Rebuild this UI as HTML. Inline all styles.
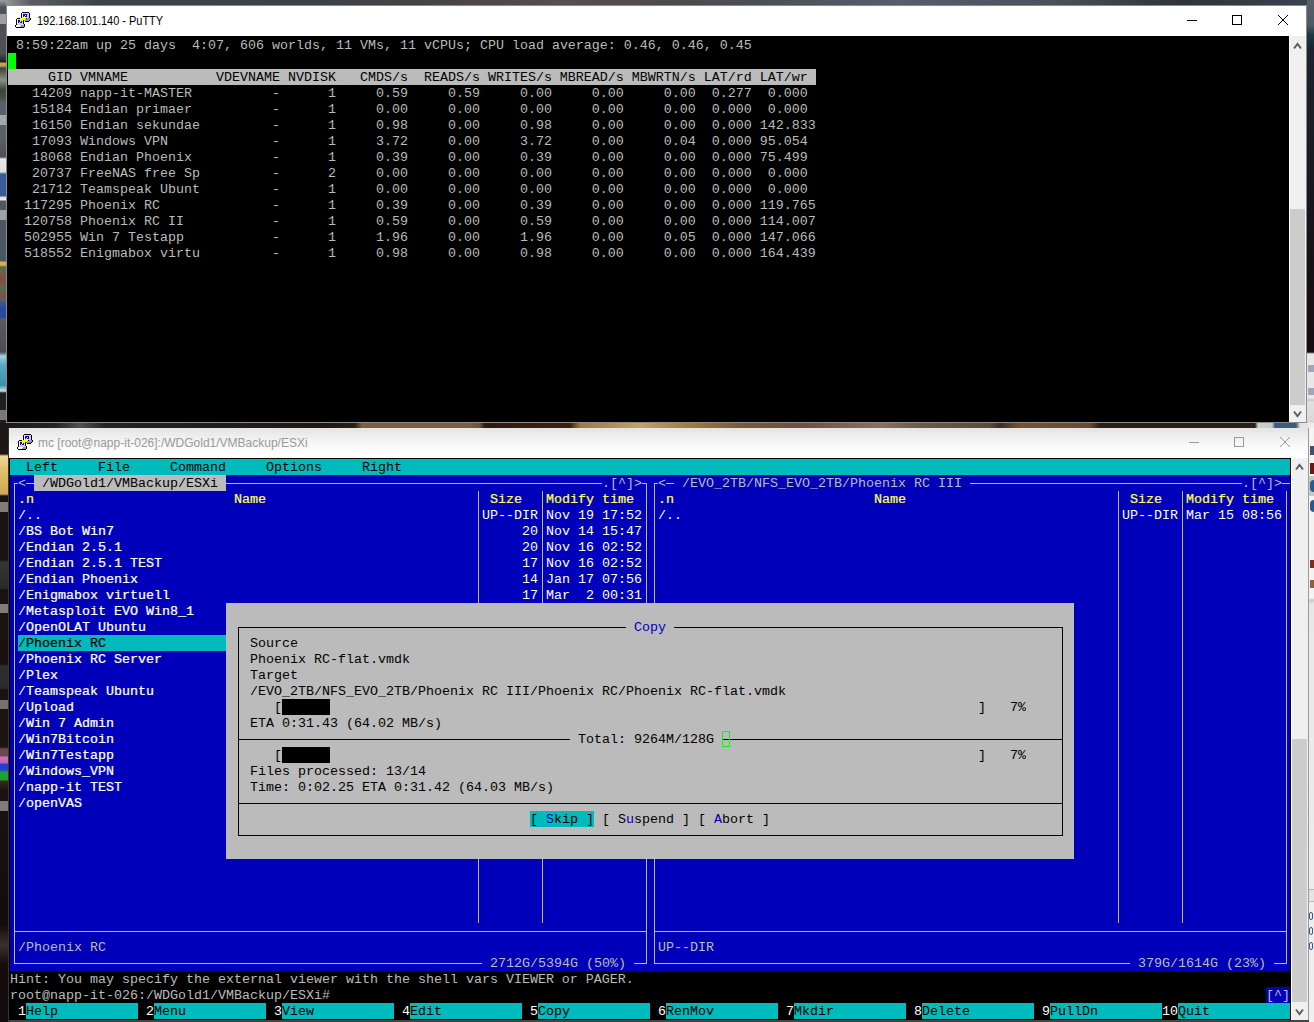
<!DOCTYPE html>
<html><head><meta charset="utf-8">
<style>
html,body{margin:0;padding:0;}
body{width:1314px;height:1022px;position:relative;overflow:hidden;background:#1c1614;}
.b{position:absolute;}
.t{position:absolute;white-space:pre;font-family:"Liberation Mono",monospace;font-size:13.3333px;line-height:16px;height:15px;padding-top:1px;}
.t>i{font-style:normal;display:inline-block;transform:scaleY(0.9);transform-origin:0 12px;}
.b2{-webkit-text-stroke:0.25px currentColor;}
.cap{position:absolute;font-family:"Liberation Sans",sans-serif;font-size:12px;white-space:pre;}
</style></head><body>
<!-- desktop -->
<div class="b" style="left:0;top:0;width:1314px;height:6px;background:linear-gradient(90deg,#a0a4a8 0,#5a5e62 30px,#3c4348 100px,#3a4248 320px,#4a4448 450px,#5a4c4c 560px,#4e4a4e 680px,#4a5058 760px,#545e6c 900px,#4a525c 1050px,#2e343a 1180px,#3a4450 1314px)"></div>
<div class="b" style="left:0;top:0;width:6px;height:423px;background:linear-gradient(180deg,#9a9ea2 0,#6a6e72 5px,#4e5256 7px,#4c5054 54px,#2a2a2a 60px,#1e1c1c 62px,#c8a850 63px,#c0a050 66px,#3a4438 68px,#8a9088 80px,#3a4438 90px,#485048 98px,#5a6068 102px,#5a6068 140px,#505458 150px,#505458 157px,#e8e8e8 159px,#e0e0e0 172px,#3a5a9a 174px,#3a5a9a 196px,#e0e0e0 197px,#e8e8e8 200px,#50565c 201px,#50565c 230px,#4a5866 234px,#4a5866 261px,#d8b050 262px,#d8b050 265px,#50704a 267px,#8a4848 280px,#50704a 290px,#8a4848 297px,#586068 299px,#2a4aa0 308px,#2a4aa0 317px,#585c62 319px,#4a4e54 352px,#a0d0e0 356px,#5aaac0 365px,#3a90a8 385px,#c8e0e8 391px,#202020 393px,#202020 423px)"></div>
<div class="b" style="left:0;top:14px;width:6px;height:10px;background:rgba(255,255,255,0.45)"></div>
<div class="b" style="left:0;top:115px;width:6px;height:10px;background:rgba(255,255,255,0.45)"></div>
<div class="b" style="left:0;top:210px;width:6px;height:10px;background:rgba(255,255,255,0.45)"></div>
<div class="b" style="left:0;top:410px;width:6px;height:10px;background:rgba(255,255,255,0.4)"></div>
<div class="b" style="left:6px;top:160px;width:1px;height:0px"></div>
<div class="b" style="left:1307px;top:0;width:7px;height:423px;background:linear-gradient(180deg,#5a6068 0,#4a5a66 25px,#1a3a44 35px,#1c2230 50px,#1a1a22 150px,#161218 250px,#140c10 352px,#e8e8e8 354px,#e8e8e8 398px,#c8c8c8 400px,#e0e0e0 402px,#d8d8d8 423px)"></div><div class="b" style="left:1308px;top:365px;width:6px;height:7px;background:rgba(90,100,140,0.5)"></div><div class="b" style="left:1308px;top:388px;width:6px;height:7px;background:rgba(90,100,140,0.5)"></div>
<div class="b" style="left:0;top:423px;width:1314px;height:5px;background:linear-gradient(90deg,#1a1616 0px,#252222 55px,#505050 80px,#252222 105px,#1e1814 330px,#2a1e14 355px,#7a6040 362px,#7a6040 470px,#6a5038 480px,#2a1a10 485px,#3a2010 545px,#3a2010 570px,#a07840 580px,#c8a060 640px,#a07030 700px,#7a5a3a 740px,#6a5040 800px,#8a7060 880px,#6a5a48 920px,#5a4a3a 990px,#3a3028 1000px,#7a5030 1020px,#6a4a2a 1090px,#2a2018 1100px,#2a2018 1255px,#d0d0d0 1258px,#c8c8c8 1272px,#3a5a80 1275px,#3a5a80 1296px,#e0e0e0 1300px,#f0f0f0 1314px)"></div>
<div class="b" style="left:0;top:428px;width:9px;height:594px;background:linear-gradient(180deg,#1e1614 0px,#1e1614 26px,#f0d898 28px,#e0c070 42px,#d0a858 66px,#1a1212 68px,#1a1212 132px,#353535 134px,#2a2a2a 160px,#1a1212 162px,#1a1010 236px,#2e2e2e 238px,#2a2a2a 260px,#1a1212 262px,#1e1414 319px,#6a4a50 321px,#6a4a50 328px,#d070c0 329px,#c060b0 335px,#2040d0 336px,#2040d0 342px,#20a030 344px,#20a030 352px,#3a2a20 353px,#1a1212 362px,#140c0c 497px,#3a3030 517px,#140c0c 537px,#140c0c 594px)"></div>
<div class="b" style="left:0;top:502px;width:8px;height:10px;background:rgba(255,255,255,0.45)"></div>
<div class="b" style="left:0;top:604px;width:8px;height:9px;background:rgba(255,255,255,0.45)"></div>
<div class="b" style="left:0;top:700px;width:8px;height:9px;background:rgba(255,255,255,0.4)"></div>
<div class="b" style="left:0;top:801px;width:8px;height:10px;background:rgba(255,255,255,0.45)"></div>
<div class="b" style="left:8px;top:428px;width:1px;height:594px;background:#3a3230"></div>
<div class="b" style="left:1309px;top:428px;width:5px;height:594px;background:linear-gradient(180deg,#f4f4f4 0,#f4f4f4 170px,#c8c8c8 172px,#e8e8e8 176px,#f0f0f0 594px)"></div>

<div class="b" style="left:1310px;top:446px;width:4px;height:9px;background:#40506a"></div>
<div class="b" style="left:1310px;top:463px;width:4px;height:11px;background:#6a1818"></div>
<div class="b" style="left:1309px;top:476px;width:5px;height:20px;background:#c8c8c8"></div>
<div class="b" style="left:1310px;top:480px;width:4px;height:12px;background:#2a5a8a;border-radius:6px 0 0 6px"></div>
<div class="b" style="left:1310px;top:500px;width:4px;height:12px;background:#2a5a8a;border-radius:6px 0 0 6px"></div>
<div class="b" style="left:1310px;top:560px;width:4px;height:8px;background:#7a3020"></div>
<div class="b" style="left:1310px;top:580px;width:4px;height:8px;background:#8a6040"></div>

<div class="b" style="left:1309px;top:889px;width:5px;height:13px;background:#e4e4e4;border-top:1px solid #b8b8b8;border-bottom:1px solid #b8b8b8;box-sizing:border-box"></div>
<div class="b" style="left:1309px;top:912px;width:4px;height:8px;border:1px solid #3a5a90;border-radius:2px;box-sizing:border-box"></div>
<div class="b" style="left:1309px;top:927px;width:4px;height:8px;border:1px solid #3a5a90;border-radius:2px;box-sizing:border-box"></div>
<div class="b" style="left:1309px;top:942px;width:4px;height:8px;border:1px solid #3a5a90;border-radius:2px;box-sizing:border-box"></div>

<!-- window 1 -->
<div class="b" style="left:6px;top:5px;width:1301px;height:418px;background:#8a8a8a"></div>
<div class="b" style="left:7px;top:6px;width:1299px;height:30px;background:#fff"></div>
<div class="b" style="left:7px;top:36px;width:1282px;height:386px;background:#000"></div>
<div class="b" style="left:1289px;top:36px;width:1px;height:386px;background:#fff"></div>
<div class="b" style="left:1290px;top:36px;width:16px;height:386px;background:#f0f0f0"></div>
<div class="b" style="left:1290px;top:209px;width:15px;height:196px;background:#cdcdcd"></div>
<svg class="b" style="left:1290px;top:36px" width="16" height="386" viewBox="0 0 16 386"><path d="M4 12.5 L7.5 8 L11 12.5" fill="none" stroke="#606060" stroke-width="2"/><path d="M4 375.5 L7.5 380 L11 375.5" fill="none" stroke="#606060" stroke-width="2"/></svg>
<svg class="b" style="left:15px;top:12px" width="16" height="16" viewBox="0 0 16 16" shape-rendering="crispEdges"><rect x="7" y="0" width="1" height="1" fill="#000"/><rect x="8" y="0" width="1" height="1" fill="#000"/><rect x="9" y="0" width="1" height="1" fill="#000"/><rect x="10" y="0" width="1" height="1" fill="#000"/><rect x="11" y="0" width="1" height="1" fill="#000"/><rect x="12" y="0" width="1" height="1" fill="#000"/><rect x="13" y="0" width="1" height="1" fill="#000"/><rect x="6" y="1" width="1" height="1" fill="#000"/><rect x="7" y="1" width="1" height="1" fill="#fff"/><rect x="8" y="1" width="1" height="1" fill="#d0d0d0"/><rect x="9" y="1" width="1" height="1" fill="#d0d0d0"/><rect x="10" y="1" width="1" height="1" fill="#d0d0d0"/><rect x="11" y="1" width="1" height="1" fill="#d0d0d0"/><rect x="12" y="1" width="1" height="1" fill="#d0d0d0"/><rect x="13" y="1" width="1" height="1" fill="#d0d0d0"/><rect x="14" y="1" width="1" height="1" fill="#000"/><rect x="6" y="2" width="1" height="1" fill="#000"/><rect x="7" y="2" width="1" height="1" fill="#fff"/><rect x="8" y="2" width="1" height="1" fill="#0000ff"/><rect x="9" y="2" width="1" height="1" fill="#0000ff"/><rect x="10" y="2" width="1" height="1" fill="#0000ff"/><rect x="11" y="2" width="1" height="1" fill="#0000ff"/><rect x="12" y="2" width="1" height="1" fill="#d0d0d0"/><rect x="13" y="2" width="1" height="1" fill="#d0d0d0"/><rect x="14" y="2" width="1" height="1" fill="#000"/><rect x="6" y="3" width="1" height="1" fill="#000"/><rect x="7" y="3" width="1" height="1" fill="#fff"/><rect x="8" y="3" width="1" height="1" fill="#0000ff"/><rect x="9" y="3" width="1" height="1" fill="#0000ff"/><rect x="10" y="3" width="1" height="1" fill="#ffff00"/><rect x="11" y="3" width="1" height="1" fill="#0000ff"/><rect x="12" y="3" width="1" height="1" fill="#d0d0d0"/><rect x="13" y="3" width="1" height="1" fill="#d0d0d0"/><rect x="14" y="3" width="1" height="1" fill="#000"/><rect x="6" y="4" width="1" height="1" fill="#000"/><rect x="7" y="4" width="1" height="1" fill="#fff"/><rect x="8" y="4" width="1" height="1" fill="#0000ff"/><rect x="9" y="4" width="1" height="1" fill="#ffff00"/><rect x="10" y="4" width="1" height="1" fill="#0000ff"/><rect x="11" y="4" width="1" height="1" fill="#0000ff"/><rect x="12" y="4" width="1" height="1" fill="#d0d0d0"/><rect x="13" y="4" width="1" height="1" fill="#d0d0d0"/><rect x="14" y="4" width="1" height="1" fill="#000"/><rect x="6" y="5" width="1" height="1" fill="#000"/><rect x="7" y="5" width="1" height="1" fill="#fff"/><rect x="8" y="5" width="1" height="1" fill="#ffff00"/><rect x="9" y="5" width="1" height="1" fill="#ffff00"/><rect x="10" y="5" width="1" height="1" fill="#ffff00"/><rect x="11" y="5" width="1" height="1" fill="#ffff00"/><rect x="12" y="5" width="1" height="1" fill="#d0d0d0"/><rect x="13" y="5" width="1" height="1" fill="#d0d0d0"/><rect x="14" y="5" width="1" height="1" fill="#000"/><rect x="2" y="6" width="1" height="1" fill="#000"/><rect x="3" y="6" width="1" height="1" fill="#000"/><rect x="4" y="6" width="1" height="1" fill="#000"/><rect x="5" y="6" width="1" height="1" fill="#ffff00"/><rect x="6" y="6" width="1" height="1" fill="#ffff00"/><rect x="7" y="6" width="1" height="1" fill="#ffff00"/><rect x="8" y="6" width="1" height="1" fill="#ffff00"/><rect x="9" y="6" width="1" height="1" fill="#ffff00"/><rect x="10" y="6" width="1" height="1" fill="#ffff00"/><rect x="11" y="6" width="1" height="1" fill="#000"/><rect x="12" y="6" width="1" height="1" fill="#9a9a9a"/><rect x="13" y="6" width="1" height="1" fill="#9a9a9a"/><rect x="14" y="6" width="1" height="1" fill="#9a9a9a"/><rect x="15" y="6" width="1" height="1" fill="#000"/><rect x="1" y="7" width="1" height="1" fill="#000"/><rect x="2" y="7" width="1" height="1" fill="#fff"/><rect x="3" y="7" width="1" height="1" fill="#d0d0d0"/><rect x="4" y="7" width="1" height="1" fill="#d0d0d0"/><rect x="5" y="7" width="1" height="1" fill="#d0d0d0"/><rect x="6" y="7" width="1" height="1" fill="#ffff00"/><rect x="7" y="7" width="1" height="1" fill="#ffff00"/><rect x="8" y="7" width="1" height="1" fill="#ffff00"/><rect x="9" y="7" width="1" height="1" fill="#ffff00"/><rect x="10" y="7" width="1" height="1" fill="#9a9a9a"/><rect x="11" y="7" width="1" height="1" fill="#9a9a9a"/><rect x="12" y="7" width="1" height="1" fill="#9a9a9a"/><rect x="13" y="7" width="1" height="1" fill="#9a9a9a"/><rect x="14" y="7" width="1" height="1" fill="#9a9a9a"/><rect x="15" y="7" width="1" height="1" fill="#000"/><rect x="1" y="8" width="1" height="1" fill="#000"/><rect x="2" y="8" width="1" height="1" fill="#fff"/><rect x="3" y="8" width="1" height="1" fill="#0000ff"/><rect x="4" y="8" width="1" height="1" fill="#0000ff"/><rect x="5" y="8" width="1" height="1" fill="#ffff00"/><rect x="6" y="8" width="1" height="1" fill="#ffff00"/><rect x="7" y="8" width="1" height="1" fill="#ffff00"/><rect x="8" y="8" width="1" height="1" fill="#000"/><rect x="9" y="8" width="1" height="1" fill="#9a9a9a"/><rect x="10" y="8" width="1" height="1" fill="#9a9a9a"/><rect x="11" y="8" width="1" height="1" fill="#9a9a9a"/><rect x="12" y="8" width="1" height="1" fill="#9a9a9a"/><rect x="13" y="8" width="1" height="1" fill="#9a9a9a"/><rect x="14" y="8" width="1" height="1" fill="#000"/><rect x="1" y="9" width="1" height="1" fill="#000"/><rect x="2" y="9" width="1" height="1" fill="#fff"/><rect x="3" y="9" width="1" height="1" fill="#0000ff"/><rect x="4" y="9" width="1" height="1" fill="#0000ff"/><rect x="5" y="9" width="1" height="1" fill="#ffff00"/><rect x="6" y="9" width="1" height="1" fill="#0000ff"/><rect x="7" y="9" width="1" height="1" fill="#d0d0d0"/><rect x="8" y="9" width="1" height="1" fill="#000"/><rect x="10" y="9" width="1" height="1" fill="#000"/><rect x="11" y="9" width="1" height="1" fill="#000"/><rect x="12" y="9" width="1" height="1" fill="#000"/><rect x="13" y="9" width="1" height="1" fill="#000"/><rect x="1" y="10" width="1" height="1" fill="#000"/><rect x="2" y="10" width="1" height="1" fill="#fff"/><rect x="3" y="10" width="1" height="1" fill="#0000ff"/><rect x="4" y="10" width="1" height="1" fill="#ffff00"/><rect x="5" y="10" width="1" height="1" fill="#0000ff"/><rect x="6" y="10" width="1" height="1" fill="#0000ff"/><rect x="7" y="10" width="1" height="1" fill="#d0d0d0"/><rect x="8" y="10" width="1" height="1" fill="#000"/><rect x="1" y="11" width="1" height="1" fill="#000"/><rect x="2" y="11" width="1" height="1" fill="#fff"/><rect x="3" y="11" width="1" height="1" fill="#d0d0d0"/><rect x="4" y="11" width="1" height="1" fill="#d0d0d0"/><rect x="5" y="11" width="1" height="1" fill="#d0d0d0"/><rect x="6" y="11" width="1" height="1" fill="#d0d0d0"/><rect x="7" y="11" width="1" height="1" fill="#d0d0d0"/><rect x="8" y="11" width="1" height="1" fill="#000"/><rect x="1" y="12" width="1" height="1" fill="#000"/><rect x="2" y="12" width="1" height="1" fill="#d0d0d0"/><rect x="3" y="12" width="1" height="1" fill="#d0d0d0"/><rect x="4" y="12" width="1" height="1" fill="#d0d0d0"/><rect x="5" y="12" width="1" height="1" fill="#d0d0d0"/><rect x="6" y="12" width="1" height="1" fill="#d0d0d0"/><rect x="7" y="12" width="1" height="1" fill="#d0d0d0"/><rect x="8" y="12" width="1" height="1" fill="#d0d0d0"/><rect x="9" y="12" width="1" height="1" fill="#000"/><rect x="0" y="13" width="1" height="1" fill="#000"/><rect x="1" y="13" width="1" height="1" fill="#fff"/><rect x="2" y="13" width="1" height="1" fill="#fff"/><rect x="3" y="13" width="1" height="1" fill="#fff"/><rect x="4" y="13" width="1" height="1" fill="#fff"/><rect x="5" y="13" width="1" height="1" fill="#fff"/><rect x="6" y="13" width="1" height="1" fill="#9a9a9a"/><rect x="7" y="13" width="1" height="1" fill="#9a9a9a"/><rect x="8" y="13" width="1" height="1" fill="#9a9a9a"/><rect x="9" y="13" width="1" height="1" fill="#000"/><rect x="0" y="14" width="1" height="1" fill="#000"/><rect x="1" y="14" width="1" height="1" fill="#fff"/><rect x="2" y="14" width="1" height="1" fill="#fff"/><rect x="3" y="14" width="1" height="1" fill="#fff"/><rect x="4" y="14" width="1" height="1" fill="#fff"/><rect x="5" y="14" width="1" height="1" fill="#9a9a9a"/><rect x="6" y="14" width="1" height="1" fill="#9a9a9a"/><rect x="7" y="14" width="1" height="1" fill="#9a9a9a"/><rect x="8" y="14" width="1" height="1" fill="#9a9a9a"/><rect x="9" y="14" width="1" height="1" fill="#000"/><rect x="1" y="15" width="1" height="1" fill="#000"/><rect x="2" y="15" width="1" height="1" fill="#000"/><rect x="3" y="15" width="1" height="1" fill="#000"/><rect x="4" y="15" width="1" height="1" fill="#000"/><rect x="5" y="15" width="1" height="1" fill="#000"/><rect x="6" y="15" width="1" height="1" fill="#000"/><rect x="7" y="15" width="1" height="1" fill="#000"/><rect x="8" y="15" width="1" height="1" fill="#000"/></svg>
<div class="cap" style="left:37px;top:14px;color:#000;transform:scaleX(0.913);transform-origin:0 0">192.168.101.140 - PuTTY</div>
<svg class="b" style="left:1175px;top:11px" width="130" height="20" viewBox="0 0 130 20">
<rect x="12" y="9" width="10" height="1" fill="#000"/>
<rect x="57.5" y="4.5" width="9" height="9" fill="none" stroke="#000"/>
<path d="M103 4 L113 14 M113 4 L103 14" stroke="#000" stroke-width="1"/>
</svg>

<!-- window 2 -->
<div class="b" style="left:9px;top:428px;width:1300px;height:594px;background:#9a9a9a"></div><div class="b" style="left:9px;top:1020px;width:1300px;height:2px;background:#444"></div>
<div class="b" style="left:9px;top:428px;width:1299px;height:30px;background:linear-gradient(180deg,#e4e4e4 0,#fafafa 18px,#fff 30px)"></div>
<div class="b" style="left:9px;top:458px;width:1282px;height:562px;background:#000"></div><div class="b" style="left:1291px;top:458px;width:1px;height:562px;background:#fff"></div>
<div class="b" style="left:1292px;top:458px;width:16px;height:562px;background:#f0f0f0"></div>
<div class="b" style="left:1292px;top:739px;width:15px;height:263px;background:#cdcdcd"></div>
<svg class="b" style="left:1290px;top:458px" width="18" height="562" viewBox="0 0 18 562"><path d="M6 11.5 L9.5 7 L13 11.5" fill="none" stroke="#606060" stroke-width="2"/><path d="M6 551.5 L9.5 556 L13 551.5" fill="none" stroke="#606060" stroke-width="2"/></svg>
<svg class="b" style="left:17px;top:434px" width="16" height="16" viewBox="0 0 16 16" shape-rendering="crispEdges"><rect x="7" y="0" width="1" height="1" fill="#000"/><rect x="8" y="0" width="1" height="1" fill="#000"/><rect x="9" y="0" width="1" height="1" fill="#000"/><rect x="10" y="0" width="1" height="1" fill="#000"/><rect x="11" y="0" width="1" height="1" fill="#000"/><rect x="12" y="0" width="1" height="1" fill="#000"/><rect x="13" y="0" width="1" height="1" fill="#000"/><rect x="6" y="1" width="1" height="1" fill="#000"/><rect x="7" y="1" width="1" height="1" fill="#fff"/><rect x="8" y="1" width="1" height="1" fill="#d0d0d0"/><rect x="9" y="1" width="1" height="1" fill="#d0d0d0"/><rect x="10" y="1" width="1" height="1" fill="#d0d0d0"/><rect x="11" y="1" width="1" height="1" fill="#d0d0d0"/><rect x="12" y="1" width="1" height="1" fill="#d0d0d0"/><rect x="13" y="1" width="1" height="1" fill="#d0d0d0"/><rect x="14" y="1" width="1" height="1" fill="#000"/><rect x="6" y="2" width="1" height="1" fill="#000"/><rect x="7" y="2" width="1" height="1" fill="#fff"/><rect x="8" y="2" width="1" height="1" fill="#0000ff"/><rect x="9" y="2" width="1" height="1" fill="#0000ff"/><rect x="10" y="2" width="1" height="1" fill="#0000ff"/><rect x="11" y="2" width="1" height="1" fill="#0000ff"/><rect x="12" y="2" width="1" height="1" fill="#d0d0d0"/><rect x="13" y="2" width="1" height="1" fill="#d0d0d0"/><rect x="14" y="2" width="1" height="1" fill="#000"/><rect x="6" y="3" width="1" height="1" fill="#000"/><rect x="7" y="3" width="1" height="1" fill="#fff"/><rect x="8" y="3" width="1" height="1" fill="#0000ff"/><rect x="9" y="3" width="1" height="1" fill="#0000ff"/><rect x="10" y="3" width="1" height="1" fill="#ffff00"/><rect x="11" y="3" width="1" height="1" fill="#0000ff"/><rect x="12" y="3" width="1" height="1" fill="#d0d0d0"/><rect x="13" y="3" width="1" height="1" fill="#d0d0d0"/><rect x="14" y="3" width="1" height="1" fill="#000"/><rect x="6" y="4" width="1" height="1" fill="#000"/><rect x="7" y="4" width="1" height="1" fill="#fff"/><rect x="8" y="4" width="1" height="1" fill="#0000ff"/><rect x="9" y="4" width="1" height="1" fill="#ffff00"/><rect x="10" y="4" width="1" height="1" fill="#0000ff"/><rect x="11" y="4" width="1" height="1" fill="#0000ff"/><rect x="12" y="4" width="1" height="1" fill="#d0d0d0"/><rect x="13" y="4" width="1" height="1" fill="#d0d0d0"/><rect x="14" y="4" width="1" height="1" fill="#000"/><rect x="6" y="5" width="1" height="1" fill="#000"/><rect x="7" y="5" width="1" height="1" fill="#fff"/><rect x="8" y="5" width="1" height="1" fill="#ffff00"/><rect x="9" y="5" width="1" height="1" fill="#ffff00"/><rect x="10" y="5" width="1" height="1" fill="#ffff00"/><rect x="11" y="5" width="1" height="1" fill="#ffff00"/><rect x="12" y="5" width="1" height="1" fill="#d0d0d0"/><rect x="13" y="5" width="1" height="1" fill="#d0d0d0"/><rect x="14" y="5" width="1" height="1" fill="#000"/><rect x="2" y="6" width="1" height="1" fill="#000"/><rect x="3" y="6" width="1" height="1" fill="#000"/><rect x="4" y="6" width="1" height="1" fill="#000"/><rect x="5" y="6" width="1" height="1" fill="#ffff00"/><rect x="6" y="6" width="1" height="1" fill="#ffff00"/><rect x="7" y="6" width="1" height="1" fill="#ffff00"/><rect x="8" y="6" width="1" height="1" fill="#ffff00"/><rect x="9" y="6" width="1" height="1" fill="#ffff00"/><rect x="10" y="6" width="1" height="1" fill="#ffff00"/><rect x="11" y="6" width="1" height="1" fill="#000"/><rect x="12" y="6" width="1" height="1" fill="#9a9a9a"/><rect x="13" y="6" width="1" height="1" fill="#9a9a9a"/><rect x="14" y="6" width="1" height="1" fill="#9a9a9a"/><rect x="15" y="6" width="1" height="1" fill="#000"/><rect x="1" y="7" width="1" height="1" fill="#000"/><rect x="2" y="7" width="1" height="1" fill="#fff"/><rect x="3" y="7" width="1" height="1" fill="#d0d0d0"/><rect x="4" y="7" width="1" height="1" fill="#d0d0d0"/><rect x="5" y="7" width="1" height="1" fill="#d0d0d0"/><rect x="6" y="7" width="1" height="1" fill="#ffff00"/><rect x="7" y="7" width="1" height="1" fill="#ffff00"/><rect x="8" y="7" width="1" height="1" fill="#ffff00"/><rect x="9" y="7" width="1" height="1" fill="#ffff00"/><rect x="10" y="7" width="1" height="1" fill="#9a9a9a"/><rect x="11" y="7" width="1" height="1" fill="#9a9a9a"/><rect x="12" y="7" width="1" height="1" fill="#9a9a9a"/><rect x="13" y="7" width="1" height="1" fill="#9a9a9a"/><rect x="14" y="7" width="1" height="1" fill="#9a9a9a"/><rect x="15" y="7" width="1" height="1" fill="#000"/><rect x="1" y="8" width="1" height="1" fill="#000"/><rect x="2" y="8" width="1" height="1" fill="#fff"/><rect x="3" y="8" width="1" height="1" fill="#0000ff"/><rect x="4" y="8" width="1" height="1" fill="#0000ff"/><rect x="5" y="8" width="1" height="1" fill="#ffff00"/><rect x="6" y="8" width="1" height="1" fill="#ffff00"/><rect x="7" y="8" width="1" height="1" fill="#ffff00"/><rect x="8" y="8" width="1" height="1" fill="#000"/><rect x="9" y="8" width="1" height="1" fill="#9a9a9a"/><rect x="10" y="8" width="1" height="1" fill="#9a9a9a"/><rect x="11" y="8" width="1" height="1" fill="#9a9a9a"/><rect x="12" y="8" width="1" height="1" fill="#9a9a9a"/><rect x="13" y="8" width="1" height="1" fill="#9a9a9a"/><rect x="14" y="8" width="1" height="1" fill="#000"/><rect x="1" y="9" width="1" height="1" fill="#000"/><rect x="2" y="9" width="1" height="1" fill="#fff"/><rect x="3" y="9" width="1" height="1" fill="#0000ff"/><rect x="4" y="9" width="1" height="1" fill="#0000ff"/><rect x="5" y="9" width="1" height="1" fill="#ffff00"/><rect x="6" y="9" width="1" height="1" fill="#0000ff"/><rect x="7" y="9" width="1" height="1" fill="#d0d0d0"/><rect x="8" y="9" width="1" height="1" fill="#000"/><rect x="10" y="9" width="1" height="1" fill="#000"/><rect x="11" y="9" width="1" height="1" fill="#000"/><rect x="12" y="9" width="1" height="1" fill="#000"/><rect x="13" y="9" width="1" height="1" fill="#000"/><rect x="1" y="10" width="1" height="1" fill="#000"/><rect x="2" y="10" width="1" height="1" fill="#fff"/><rect x="3" y="10" width="1" height="1" fill="#0000ff"/><rect x="4" y="10" width="1" height="1" fill="#ffff00"/><rect x="5" y="10" width="1" height="1" fill="#0000ff"/><rect x="6" y="10" width="1" height="1" fill="#0000ff"/><rect x="7" y="10" width="1" height="1" fill="#d0d0d0"/><rect x="8" y="10" width="1" height="1" fill="#000"/><rect x="1" y="11" width="1" height="1" fill="#000"/><rect x="2" y="11" width="1" height="1" fill="#fff"/><rect x="3" y="11" width="1" height="1" fill="#d0d0d0"/><rect x="4" y="11" width="1" height="1" fill="#d0d0d0"/><rect x="5" y="11" width="1" height="1" fill="#d0d0d0"/><rect x="6" y="11" width="1" height="1" fill="#d0d0d0"/><rect x="7" y="11" width="1" height="1" fill="#d0d0d0"/><rect x="8" y="11" width="1" height="1" fill="#000"/><rect x="1" y="12" width="1" height="1" fill="#000"/><rect x="2" y="12" width="1" height="1" fill="#d0d0d0"/><rect x="3" y="12" width="1" height="1" fill="#d0d0d0"/><rect x="4" y="12" width="1" height="1" fill="#d0d0d0"/><rect x="5" y="12" width="1" height="1" fill="#d0d0d0"/><rect x="6" y="12" width="1" height="1" fill="#d0d0d0"/><rect x="7" y="12" width="1" height="1" fill="#d0d0d0"/><rect x="8" y="12" width="1" height="1" fill="#d0d0d0"/><rect x="9" y="12" width="1" height="1" fill="#000"/><rect x="0" y="13" width="1" height="1" fill="#000"/><rect x="1" y="13" width="1" height="1" fill="#fff"/><rect x="2" y="13" width="1" height="1" fill="#fff"/><rect x="3" y="13" width="1" height="1" fill="#fff"/><rect x="4" y="13" width="1" height="1" fill="#fff"/><rect x="5" y="13" width="1" height="1" fill="#fff"/><rect x="6" y="13" width="1" height="1" fill="#9a9a9a"/><rect x="7" y="13" width="1" height="1" fill="#9a9a9a"/><rect x="8" y="13" width="1" height="1" fill="#9a9a9a"/><rect x="9" y="13" width="1" height="1" fill="#000"/><rect x="0" y="14" width="1" height="1" fill="#000"/><rect x="1" y="14" width="1" height="1" fill="#fff"/><rect x="2" y="14" width="1" height="1" fill="#fff"/><rect x="3" y="14" width="1" height="1" fill="#fff"/><rect x="4" y="14" width="1" height="1" fill="#fff"/><rect x="5" y="14" width="1" height="1" fill="#9a9a9a"/><rect x="6" y="14" width="1" height="1" fill="#9a9a9a"/><rect x="7" y="14" width="1" height="1" fill="#9a9a9a"/><rect x="8" y="14" width="1" height="1" fill="#9a9a9a"/><rect x="9" y="14" width="1" height="1" fill="#000"/><rect x="1" y="15" width="1" height="1" fill="#000"/><rect x="2" y="15" width="1" height="1" fill="#000"/><rect x="3" y="15" width="1" height="1" fill="#000"/><rect x="4" y="15" width="1" height="1" fill="#000"/><rect x="5" y="15" width="1" height="1" fill="#000"/><rect x="6" y="15" width="1" height="1" fill="#000"/><rect x="7" y="15" width="1" height="1" fill="#000"/><rect x="8" y="15" width="1" height="1" fill="#000"/></svg>
<div class="cap" style="left:38px;top:436px;color:#999">mc [root@napp-it-026]:/WDGold1/VMBackup/ESXi</div>
<svg class="b" style="left:1177px;top:433px" width="130" height="20" viewBox="0 0 130 20">
<rect x="12" y="9" width="10" height="1" fill="#999"/>
<rect x="57.5" y="4.5" width="9" height="9" fill="none" stroke="#999"/>
<path d="M103 4 L113 14 M113 4 L103 14" stroke="#999" stroke-width="1"/>
</svg>

<div class="t" style="left:16px;top:37px;color:#bbbbbb"><i>8:59:22am up 25 days  4:07, 606 worlds, 11 VMs, 11 vCPUs; CPU load average: 0.46, 0.46, 0.45</i></div>
<div class="b" style="left:8px;top:53px;width:8px;height:16px;background:#00ff00"></div>
<div class="t" style="left:8px;top:69px;color:#000000;background:#bbbbbb"><i>     GID VMNAME           VDEVNAME NVDISK   CMDS/s  READS/s WRITES/s MBREAD/s MBWRTN/s LAT/rd LAT/wr </i></div>
<div class="t" style="left:8px;top:85px;color:#bbbbbb"><i>   14209 napp-it-MASTER          -      1     0.59     0.59     0.00     0.00     0.00  0.277  0.000</i></div>
<div class="t" style="left:8px;top:101px;color:#bbbbbb"><i>   15184 Endian primaer          -      1     0.00     0.00     0.00     0.00     0.00  0.000  0.000</i></div>
<div class="t" style="left:8px;top:117px;color:#bbbbbb"><i>   16150 Endian sekundae         -      1     0.98     0.00     0.98     0.00     0.00  0.000 142.833</i></div>
<div class="t" style="left:8px;top:133px;color:#bbbbbb"><i>   17093 Windows VPN             -      1     3.72     0.00     3.72     0.00     0.04  0.000 95.054</i></div>
<div class="t" style="left:8px;top:149px;color:#bbbbbb"><i>   18068 Endian Phoenix          -      1     0.39     0.00     0.39     0.00     0.00  0.000 75.499</i></div>
<div class="t" style="left:8px;top:165px;color:#bbbbbb"><i>   20737 FreeNAS free Sp         -      2     0.00     0.00     0.00     0.00     0.00  0.000  0.000</i></div>
<div class="t" style="left:8px;top:181px;color:#bbbbbb"><i>   21712 Teamspeak Ubunt         -      1     0.00     0.00     0.00     0.00     0.00  0.000  0.000</i></div>
<div class="t" style="left:8px;top:197px;color:#bbbbbb"><i>  117295 Phoenix RC              -      1     0.39     0.00     0.39     0.00     0.00  0.000 119.765</i></div>
<div class="t" style="left:8px;top:213px;color:#bbbbbb"><i>  120758 Phoenix RC II           -      1     0.59     0.00     0.59     0.00     0.00  0.000 114.007</i></div>
<div class="t" style="left:8px;top:229px;color:#bbbbbb"><i>  502955 Win 7 Testapp           -      1     1.96     0.00     1.96     0.00     0.05  0.000 147.066</i></div>
<div class="t" style="left:8px;top:245px;color:#bbbbbb"><i>  518552 Enigmabox virtu         -      1     0.98     0.00     0.98     0.00     0.00  0.000 164.439</i></div>
<div class="b" style="left:10px;top:459px;width:1280px;height:16px;background:#00bbbb"></div>
<div class="t" style="left:10px;top:459px;color:#000000"><i>  Left     File     Command     Options     Right</i></div>
<div class="b" style="left:10px;top:475px;width:1280px;height:496px;background:#0000bb"></div>
<div class="b" style="left:14px;top:483px;width:633px;height:481px;box-sizing:border-box;border:1px solid #bbbbbb"></div>
<div class="b" style="left:14px;top:931px;width:632px;height:1px;background:#bbbbbb"></div>
<div class="b" style="left:654px;top:483px;width:633px;height:481px;box-sizing:border-box;border:1px solid #bbbbbb"></div>
<div class="b" style="left:1282px;top:475px;width:8px;height:16px;background:#0000bb"></div>
<div class="b" style="left:1282px;top:483px;width:8px;height:1px;background:#bbbbbb"></div>
<div class="b" style="left:654px;top:931px;width:632px;height:1px;background:#bbbbbb"></div>
<div class="b" style="left:18px;top:475px;width:16px;height:16px;background:#0000bb"></div>
<div class="t" style="left:18px;top:475px;color:#bbbbbb"><i>&lt;</i></div>
<div class="b" style="left:26px;top:483px;width:8px;height:1px;background:#bbbbbb"></div>
<div class="t" style="left:34px;top:475px;color:#000000;background:#bbbbbb"><i> /WDGold1/VMBackup/ESXi </i></div>
<div class="b" style="left:602px;top:475px;width:40px;height:16px;background:#0000bb"></div>
<div class="t" style="left:602px;top:475px;color:#bbbbbb"><i>.[^]&gt;</i></div>
<div class="b" style="left:658px;top:475px;width:24px;height:16px;background:#0000bb"></div>
<div class="t" style="left:658px;top:475px;color:#bbbbbb"><i>&lt;</i></div>
<div class="b" style="left:666px;top:483px;width:8px;height:1px;background:#bbbbbb"></div>
<div class="t" style="left:674px;top:475px;color:#bbbbbb;background:#0000bb"><i> /EVO_2TB/NFS_EVO_2TB/Phoenix RC III </i></div>
<div class="b" style="left:1242px;top:475px;width:40px;height:16px;background:#0000bb"></div>
<div class="t" style="left:1242px;top:475px;color:#bbbbbb"><i>.[^]&gt;</i></div>
<div class="b" style="left:478px;top:491px;width:1px;height:432px;background:#bbbbbb"></div>
<div class="b" style="left:542px;top:491px;width:1px;height:432px;background:#bbbbbb"></div>
<div class="b" style="left:1118px;top:491px;width:1px;height:432px;background:#bbbbbb"></div>
<div class="b" style="left:1182px;top:491px;width:1px;height:432px;background:#bbbbbb"></div>
<div class="t b2" style="left:18px;top:491px;color:#ffff55"><i>.n</i></div>
<div class="t b2" style="left:234px;top:491px;color:#ffff55"><i>Name</i></div>
<div class="t b2" style="left:490px;top:491px;color:#ffff55"><i>Size</i></div>
<div class="t b2" style="left:546px;top:491px;color:#ffff55"><i>Modify time</i></div>
<div class="t b2" style="left:658px;top:491px;color:#ffff55"><i>.n</i></div>
<div class="t b2" style="left:874px;top:491px;color:#ffff55"><i>Name</i></div>
<div class="t b2" style="left:1130px;top:491px;color:#ffff55"><i>Size</i></div>
<div class="t b2" style="left:1186px;top:491px;color:#ffff55"><i>Modify time</i></div>
<div class="t" style="left:18px;top:507px;color:#ffffff"><i>/</i></div>
<div class="t" style="left:26px;top:507px;color:#ffffff"><i>..</i></div>
<div class="t" style="left:482px;top:507px;color:#ffffff"><i>UP--DIR</i></div>
<div class="t" style="left:546px;top:507px;color:#ffffff"><i>Nov 19 17:52</i></div>
<div class="t" style="left:18px;top:523px;color:#ffffff"><i>/</i></div>
<div class="t b2" style="left:26px;top:523px;color:#ffffff"><i>BS Bot Win7</i></div>
<div class="t" style="left:522px;top:523px;color:#ffffff"><i>20</i></div>
<div class="t" style="left:546px;top:523px;color:#ffffff"><i>Nov 14 15:47</i></div>
<div class="t" style="left:18px;top:539px;color:#ffffff"><i>/</i></div>
<div class="t b2" style="left:26px;top:539px;color:#ffffff"><i>Endian 2.5.1</i></div>
<div class="t" style="left:522px;top:539px;color:#ffffff"><i>20</i></div>
<div class="t" style="left:546px;top:539px;color:#ffffff"><i>Nov 16 02:52</i></div>
<div class="t" style="left:18px;top:555px;color:#ffffff"><i>/</i></div>
<div class="t b2" style="left:26px;top:555px;color:#ffffff"><i>Endian 2.5.1 TEST</i></div>
<div class="t" style="left:522px;top:555px;color:#ffffff"><i>17</i></div>
<div class="t" style="left:546px;top:555px;color:#ffffff"><i>Nov 16 02:52</i></div>
<div class="t" style="left:18px;top:571px;color:#ffffff"><i>/</i></div>
<div class="t b2" style="left:26px;top:571px;color:#ffffff"><i>Endian Phoenix</i></div>
<div class="t" style="left:522px;top:571px;color:#ffffff"><i>14</i></div>
<div class="t" style="left:546px;top:571px;color:#ffffff"><i>Jan 17 07:56</i></div>
<div class="t" style="left:18px;top:587px;color:#ffffff"><i>/</i></div>
<div class="t b2" style="left:26px;top:587px;color:#ffffff"><i>Enigmabox virtuell</i></div>
<div class="t" style="left:522px;top:587px;color:#ffffff"><i>17</i></div>
<div class="t" style="left:546px;top:587px;color:#ffffff"><i>Mar  2 00:31</i></div>
<div class="t" style="left:18px;top:603px;color:#ffffff"><i>/</i></div>
<div class="t b2" style="left:26px;top:603px;color:#ffffff"><i>Metasploit EVO Win8_1</i></div>
<div class="t" style="left:18px;top:619px;color:#ffffff"><i>/</i></div>
<div class="t b2" style="left:26px;top:619px;color:#ffffff"><i>OpenOLAT Ubuntu</i></div>
<div class="b" style="left:18px;top:635px;width:456px;height:16px;background:#00bbbb"></div>
<div class="t" style="left:18px;top:635px;color:#000000"><i>/</i></div>
<div class="t b2" style="left:26px;top:635px;color:#000000"><i>Phoenix RC</i></div>
<div class="t" style="left:18px;top:651px;color:#ffffff"><i>/</i></div>
<div class="t b2" style="left:26px;top:651px;color:#ffffff"><i>Phoenix RC Server</i></div>
<div class="t" style="left:18px;top:667px;color:#ffffff"><i>/</i></div>
<div class="t b2" style="left:26px;top:667px;color:#ffffff"><i>Plex</i></div>
<div class="t" style="left:18px;top:683px;color:#ffffff"><i>/</i></div>
<div class="t b2" style="left:26px;top:683px;color:#ffffff"><i>Teamspeak Ubuntu</i></div>
<div class="t" style="left:18px;top:699px;color:#ffffff"><i>/</i></div>
<div class="t b2" style="left:26px;top:699px;color:#ffffff"><i>Upload</i></div>
<div class="t" style="left:18px;top:715px;color:#ffffff"><i>/</i></div>
<div class="t b2" style="left:26px;top:715px;color:#ffffff"><i>Win 7 Admin</i></div>
<div class="t" style="left:18px;top:731px;color:#ffffff"><i>/</i></div>
<div class="t b2" style="left:26px;top:731px;color:#ffffff"><i>Win7Bitcoin</i></div>
<div class="t" style="left:18px;top:747px;color:#ffffff"><i>/</i></div>
<div class="t b2" style="left:26px;top:747px;color:#ffffff"><i>Win7Testapp</i></div>
<div class="t" style="left:18px;top:763px;color:#ffffff"><i>/</i></div>
<div class="t b2" style="left:26px;top:763px;color:#ffffff"><i>Windows_VPN</i></div>
<div class="t" style="left:18px;top:779px;color:#ffffff"><i>/</i></div>
<div class="t b2" style="left:26px;top:779px;color:#ffffff"><i>napp-it TEST</i></div>
<div class="t" style="left:18px;top:795px;color:#ffffff"><i>/</i></div>
<div class="t b2" style="left:26px;top:795px;color:#ffffff"><i>openVAS</i></div>
<div class="t" style="left:658px;top:507px;color:#ffffff"><i>/</i></div>
<div class="t" style="left:666px;top:507px;color:#ffffff"><i>..</i></div>
<div class="t" style="left:1122px;top:507px;color:#ffffff"><i>UP--DIR</i></div>
<div class="t" style="left:1186px;top:507px;color:#ffffff"><i>Mar 15 08:56</i></div>
<div class="t" style="left:18px;top:939px;color:#bbbbbb"><i>/Phoenix RC</i></div>
<div class="t" style="left:658px;top:939px;color:#bbbbbb"><i>UP--DIR</i></div>
<div class="b" style="left:482px;top:955px;width:152px;height:16px;background:#0000bb"></div>
<div class="t" style="left:482px;top:955px;color:#bbbbbb"><i> 2712G/5394G (50%) </i></div>
<div class="b" style="left:1130px;top:955px;width:144px;height:16px;background:#0000bb"></div>
<div class="t" style="left:1130px;top:955px;color:#bbbbbb"><i> 379G/1614G (23%) </i></div>
<div class="b" style="left:10px;top:971px;width:1280px;height:48px;background:#000000"></div>
<div class="t" style="left:10px;top:971px;color:#bbbbbb"><i>Hint: You may specify the external viewer with the shell vars VIEWER or PAGER.</i></div>
<div class="t" style="left:10px;top:987px;color:#bbbbbb"><i>root@napp-it-026:/WDGold1/VMBackup/ESXi#</i></div>
<div class="t" style="left:1266px;top:987px;color:#bbbbbb;background:#0000bb"><i>[^]</i></div>
<div class="t" style="left:18px;top:1003px;color:#ffffff"><i>1</i></div>
<div class="b" style="left:26px;top:1003px;width:112px;height:16px;background:#00bbbb"></div>
<div class="t" style="left:26px;top:1003px;color:#000000"><i>Help</i></div>
<div class="t" style="left:146px;top:1003px;color:#ffffff"><i>2</i></div>
<div class="b" style="left:154px;top:1003px;width:112px;height:16px;background:#00bbbb"></div>
<div class="t" style="left:154px;top:1003px;color:#000000"><i>Menu</i></div>
<div class="t" style="left:274px;top:1003px;color:#ffffff"><i>3</i></div>
<div class="b" style="left:282px;top:1003px;width:112px;height:16px;background:#00bbbb"></div>
<div class="t" style="left:282px;top:1003px;color:#000000"><i>View</i></div>
<div class="t" style="left:402px;top:1003px;color:#ffffff"><i>4</i></div>
<div class="b" style="left:410px;top:1003px;width:112px;height:16px;background:#00bbbb"></div>
<div class="t" style="left:410px;top:1003px;color:#000000"><i>Edit</i></div>
<div class="t" style="left:530px;top:1003px;color:#ffffff"><i>5</i></div>
<div class="b" style="left:538px;top:1003px;width:112px;height:16px;background:#00bbbb"></div>
<div class="t" style="left:538px;top:1003px;color:#000000"><i>Copy</i></div>
<div class="t" style="left:658px;top:1003px;color:#ffffff"><i>6</i></div>
<div class="b" style="left:666px;top:1003px;width:112px;height:16px;background:#00bbbb"></div>
<div class="t" style="left:666px;top:1003px;color:#000000"><i>RenMov</i></div>
<div class="t" style="left:786px;top:1003px;color:#ffffff"><i>7</i></div>
<div class="b" style="left:794px;top:1003px;width:112px;height:16px;background:#00bbbb"></div>
<div class="t" style="left:794px;top:1003px;color:#000000"><i>Mkdir</i></div>
<div class="t" style="left:914px;top:1003px;color:#ffffff"><i>8</i></div>
<div class="b" style="left:922px;top:1003px;width:112px;height:16px;background:#00bbbb"></div>
<div class="t" style="left:922px;top:1003px;color:#000000"><i>Delete</i></div>
<div class="t" style="left:1042px;top:1003px;color:#ffffff"><i>9</i></div>
<div class="b" style="left:1050px;top:1003px;width:112px;height:16px;background:#00bbbb"></div>
<div class="t" style="left:1050px;top:1003px;color:#000000"><i>PullDn</i></div>
<div class="t" style="left:1162px;top:1003px;color:#ffffff"><i>10</i></div>
<div class="b" style="left:1178px;top:1003px;width:112px;height:16px;background:#00bbbb"></div>
<div class="t" style="left:1178px;top:1003px;color:#000000"><i>Quit</i></div>
<div class="b" style="left:226px;top:603px;width:848px;height:256px;background:#bbbbbb"></div>
<div class="b" style="left:238px;top:627px;width:825px;height:209px;box-sizing:border-box;border:1px solid #000000"></div>
<div class="b" style="left:626px;top:619px;width:48px;height:16px;background:#bbbbbb"></div>
<div class="t" style="left:634px;top:619px;color:#0000bb"><i>Copy</i></div>
<div class="t" style="left:250px;top:635px;color:#000000"><i>Source</i></div>
<div class="t" style="left:250px;top:651px;color:#000000"><i>Phoenix RC-flat.vmdk</i></div>
<div class="t" style="left:250px;top:667px;color:#000000"><i>Target</i></div>
<div class="t" style="left:250px;top:683px;color:#000000"><i>/EVO_2TB/NFS_EVO_2TB/Phoenix RC III/Phoenix RC/Phoenix RC-flat.vmdk</i></div>
<div class="t" style="left:274px;top:699px;color:#000000"><i>[</i></div>
<div class="b" style="left:282px;top:699px;width:48px;height:16px;background:#000000"></div>
<div class="t" style="left:978px;top:699px;color:#000000"><i>]</i></div>
<div class="t" style="left:1010px;top:699px;color:#000000"><i>7%</i></div>
<div class="t" style="left:274px;top:747px;color:#000000"><i>[</i></div>
<div class="b" style="left:282px;top:747px;width:48px;height:16px;background:#000000"></div>
<div class="t" style="left:978px;top:747px;color:#000000"><i>]</i></div>
<div class="t" style="left:1010px;top:747px;color:#000000"><i>7%</i></div>
<div class="t" style="left:250px;top:715px;color:#000000"><i>ETA 0:31.43 (64.02 MB/s)</i></div>
<div class="b" style="left:238px;top:739px;width:824px;height:1px;background:#000000"></div>
<div class="b" style="left:570px;top:731px;width:152px;height:16px;background:#bbbbbb"></div>
<div class="t" style="left:578px;top:731px;color:#000000"><i>Total: 9264M/128G</i></div>
<div class="t" style="left:250px;top:763px;color:#000000"><i>Files processed: 13/14</i></div>
<div class="t" style="left:250px;top:779px;color:#000000"><i>Time: 0:02.25 ETA 0:31.42 (64.03 MB/s)</i></div>
<div class="b" style="left:238px;top:803px;width:824px;height:1px;background:#000000"></div>
<div class="b" style="left:530px;top:811px;width:64px;height:16px;background:#00bbbb"></div>
<div class="t" style="left:530px;top:811px;color:#000000"><i>[ </i></div>
<div class="t" style="left:546px;top:811px;color:#0000bb"><i>S</i></div>
<div class="t" style="left:554px;top:811px;color:#000000"><i>kip ]</i></div>
<div class="t" style="left:602px;top:811px;color:#000000"><i>[ S</i></div>
<div class="t" style="left:626px;top:811px;color:#0000bb"><i>u</i></div>
<div class="t" style="left:634px;top:811px;color:#000000"><i>spend ]</i></div>
<div class="t" style="left:698px;top:811px;color:#000000"><i>[ </i></div>
<div class="t" style="left:714px;top:811px;color:#0000bb"><i>A</i></div>
<div class="t" style="left:722px;top:811px;color:#000000"><i>bort ]</i></div>
<div class="b" style="left:722px;top:731px;width:8px;height:16px;box-sizing:border-box;border:1px solid #00ff00"></div>
</body></html>
